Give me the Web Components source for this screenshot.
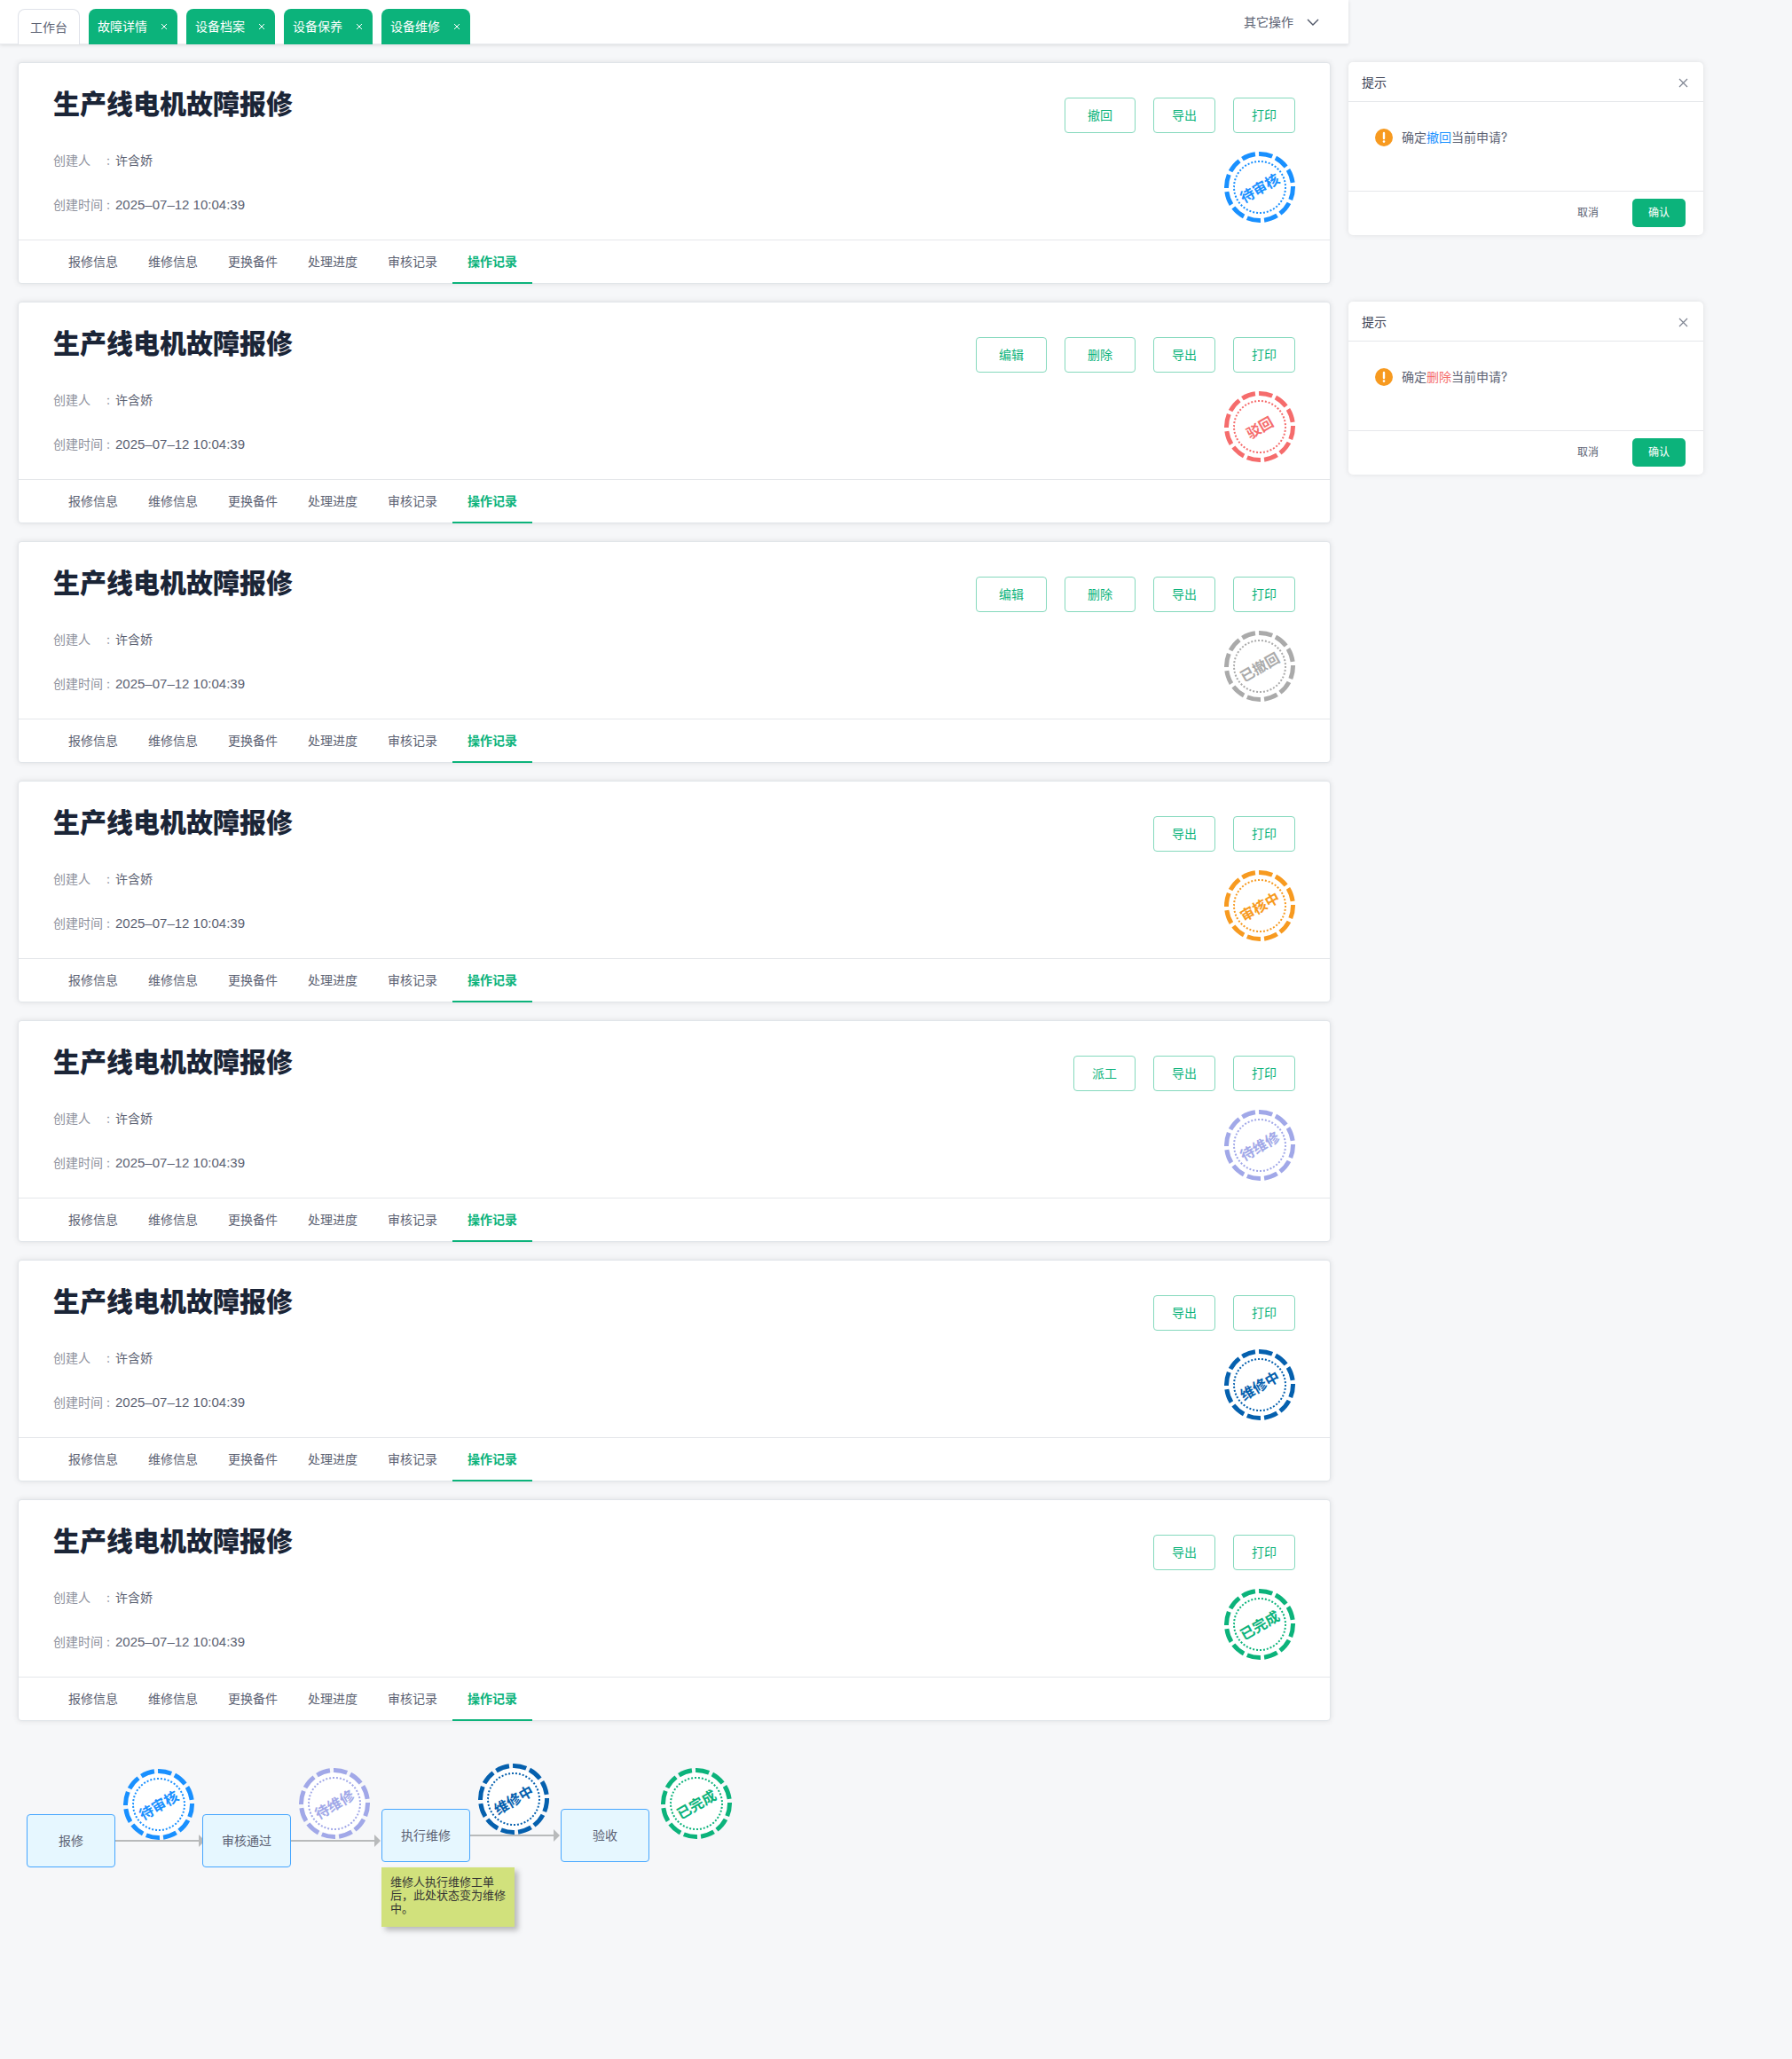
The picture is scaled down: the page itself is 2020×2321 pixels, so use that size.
<!DOCTYPE html>
<html lang="zh-CN">
<head>
<meta charset="UTF-8">
<meta name="viewport" content="width=device-width, initial-scale=1">
<title>设备维修</title>
<style>
  :root {
    --green: #0cb37b;
    --blue: #1990ff;
    --red: #f56c6c;
    --orange: #f79a20;
    --text: #5b6172;
    --muted: #8d909c;
    --line: #e5e7ea;
  }
  * { box-sizing: border-box; }
  body {
    margin: 0;
    min-height: 100vh;
    background: #f6f7f9;
    color: var(--text);
    font-family: Inter, "Noto Sans CJK SC", sans-serif;
    font-size: 14px;
    line-height: 20px;
  }
  .row {
    display: grid;
    grid-template-columns: minmax(0, 1fr) 500px;
    gap: 20px;
    padding-left: 20px;
    align-items: start;
  }
  .rows { display: grid; gap: 20px; padding-top: 20px; }
  em { font-style: normal; }
  .blue { color: var(--blue); }
  .red { color: var(--red); }
</style>
</head>
<body>
<top-bar>
  <page-tab home>工作台</page-tab>
  <page-tab>故障详情</page-tab>
  <page-tab>设备档案</page-tab>
  <page-tab>设备保养</page-tab>
  <page-tab>设备维修</page-tab>
</top-bar>

<main class="rows">
  <div class="row">
    <repair-card actions="撤回:wide,导出,打印" status="待审核" color="#1990ff"></repair-card>
    <confirm-dialog>确定<em class="blue">撤回</em>当前申请?</confirm-dialog>
  </div>
  <div class="row">
    <repair-card actions="编辑:wide,删除:wide,导出,打印" status="驳回" color="#f56c6c"></repair-card>
    <confirm-dialog>确定<em class="red">删除</em>当前申请?</confirm-dialog>
  </div>
  <div class="row">
    <repair-card actions="编辑:wide,删除:wide,导出,打印" status="已撤回" color="#aaaaaa"></repair-card>
  </div>
  <div class="row">
    <repair-card actions="导出,打印" status="审核中" color="#f79a20"></repair-card>
  </div>
  <div class="row">
    <repair-card actions="派工,导出,打印" status="待维修" color="#a1a8e8"></repair-card>
  </div>
  <div class="row">
    <repair-card actions="导出,打印" status="维修中" color="#0560ae"></repair-card>
  </div>
  <div class="row">
    <repair-card actions="导出,打印" status="已完成" color="#0cb37b"></repair-card>
  </div>
</main>

<flow-chart></flow-chart>

<script>
(function () {
  'use strict';

  const RESET = `
    * { box-sizing: border-box; }
    button { font: inherit; color: inherit; margin: 0; padding: 0; border: 0; background: none; cursor: pointer; }
  `;

  // Base class: one open shadow root filled from styles() and markup()
  class BaseElement extends HTMLElement {
    connectedCallback() {
      if (this.shadowRoot) return;
      this.attachShadow({ mode: 'open' });
      this.shadowRoot.innerHTML = `<style>${RESET}${this.styles()}</style>${this.markup()}`;
    }
    styles() { return ''; }
    markup() { return '<slot></slot>'; }
  }

  class PageTab extends BaseElement {
    styles() {
      return `
        :host {
          display: flex; align-items: center; justify-content: space-between;
          width: 100px; height: 40px; padding: 0 6px 0 10px;
          border-radius: 8px 8px 0 0;
          background: var(--green); color: #fff;
        }
        :host([home]) {
          width: 70px; padding: 0; justify-content: center;
          background: #fff; color: var(--text);
          border: 1px solid #dfe2e9; border-bottom: 0;
        }
        .close { display: flex; padding: 5px; }
        svg { width: 8px; height: 8px; stroke: #fff; fill: none; }
      `;
    }
    markup() {
      const close = `<button class="close" aria-label="关闭"><svg viewBox="0 0 8 8"><path d="M1 1l6 6M7 1l-6 6"/></svg></button>`;
      return `<button><slot></slot></button>${this.hasAttribute('home') ? '' : close}`;
    }
  }

  class TopBar extends BaseElement {
    styles() {
      return `
        :host {
          display: flex; align-items: flex-end; justify-content: space-between;
          width: calc(100% - 500px); height: 50px; padding: 0 32px 0 20px;
          background: #fff;
          box-shadow: inset 0 -1px 0 #ebedf0, 0 1px 4px rgba(0, 0, 0, 0.12);
        }
        nav { display: flex; gap: 10px; }
        .more { display: flex; align-items: center; gap: 14px; height: 50px; }
        svg { width: 16px; height: 16px; fill: none; stroke: #4e5566; stroke-width: 1.4; }
      `;
    }
    markup() {
      return `
        <nav><slot></slot></nav>
        <button class="more">其它操作<svg viewBox="0 0 16 16"><path d="M2 5l6 6 6-6"/></svg></button>`;
    }
  }

  class StatusStamp extends BaseElement {
    styles() {
      return `
        :host { display: block; width: 80px; height: 80px; flex: none; }
        svg { display: block; width: 100%; height: 100%; }
        text { font-size: 16px; font-weight: 700; text-anchor: middle; }
      `;
    }
    markup() {
      const color = this.getAttribute('color');
      return `
        <svg viewBox="0 0 80 80">
          <circle cx="40" cy="40" r="35" fill="#fff"/>
          <circle cx="40" cy="40" r="37.5" fill="none" stroke="${color}" stroke-width="5" pathLength="240" stroke-dasharray="15.8 4.2" stroke-dashoffset="1"/>
          <circle cx="40" cy="40" r="29" fill="none" stroke="${color}" stroke-width="2" pathLength="184" stroke-dasharray="2 2"/>
          <text x="40" y="47" fill="${color}" transform="rotate(-30 40 41)">${this.getAttribute('label')}</text>
        </svg>`;
    }
  }

  class RepairCard extends BaseElement {
    styles() {
      return `
        :host {
          display: block; background: #fff;
          border: 1px solid #e1e5e9; border-radius: 4px;
          box-shadow: 0 0 6px rgba(0, 0, 0, 0.1);
        }
        .body { display: flex; justify-content: space-between; height: 199px; padding: 0 39px; }
        h2 { margin: 24px 0 32px; font-size: 30px; line-height: 44px; font-weight: 900; color: #1b2537; }
        dl { display: grid; grid-template-columns: 60px 10px auto; row-gap: 30px; margin: 0; }
        dt { color: var(--muted); white-space: nowrap; }
        dd { margin: 0; }
        time { font-family: "Liberation Sans", sans-serif; font-size: 15px; }
        .side { display: flex; flex-direction: column; align-items: flex-end; gap: 21px; padding-top: 39px; }
        .actions { display: flex; gap: 20px; }
        .actions button {
          width: 70px; height: 40px;
          border: 1px solid #85d9bd; border-radius: 4px;
          color: var(--green);
        }
        .actions .wide { width: 80px; }
        nav { display: flex; height: 49px; padding: 0 39px; border-top: 1px solid var(--line); }
        nav button { width: 90px; margin-bottom: -1px; border-bottom: 2px solid transparent; }
        nav .on { color: var(--green); border-color: var(--green); font-weight: 700; }
      `;
    }
    markup() {
      const actions = this.getAttribute('actions').split(',').map(a => {
        const [label, cls] = a.split(':');
        return `<button class="${cls || ''}">${label}</button>`;
      }).join('');
      const tabs = ['报修信息', '维修信息', '更换备件', '处理进度', '审核记录', '操作记录']
        .map((t, i) => `<button class="${i === 5 ? 'on' : ''}">${t}</button>`).join('');
      return `
        <div class="body">
          <div>
            <h2>生产线电机故障报修</h2>
            <dl>
              <dt>创建人</dt><dt>:</dt><dd>许含娇</dd>
              <dt>创建时间</dt><dt>:</dt><dd><time datetime="2025-07-12T10:04:39">2025–07–12 10:04:39</time></dd>
            </dl>
          </div>
          <div class="side">
            <div class="actions">${actions}</div>
            <status-stamp label="${this.getAttribute('status')}" color="${this.getAttribute('color')}"></status-stamp>
          </div>
        </div>
        <nav>${tabs}</nav>`;
    }
  }

  class ConfirmDialog extends BaseElement {
    styles() {
      return `
        :host {
          display: block; width: 400px; background: #fff; border-radius: 5px;
          box-shadow: 0 0 6px rgba(0, 0, 0, 0.1);
        }
        header {
          display: flex; align-items: center; justify-content: space-between;
          height: 45px; padding: 1px 16px 0 15px;
          border-bottom: 1px solid var(--line); color: #3b4153;
        }
        header button { display: flex; }
        header svg { width: 14px; height: 14px; stroke: #7f8592; stroke-width: 1.2; }
        .msg { display: flex; gap: 10px; height: 100px; padding: 30px 30px 0; }
        .msg svg { width: 20px; height: 20px; flex: none; }
        footer {
          display: flex; align-items: flex-start; justify-content: flex-end; gap: 20px;
          height: 50px; padding: 8px 20px;
          border-top: 1px solid var(--line); font-size: 12px;
        }
        footer button { width: 60px; height: 32px; border-radius: 5px; }
        .ok { background: var(--green); color: #fff; }
      `;
    }
    markup() {
      return `
        <header>
          <span>提示</span>
          <button aria-label="关闭"><svg viewBox="0 0 14 14"><path d="M3 3l9 9M12 3l-9 9"/></svg></button>
        </header>
        <div class="msg">
          <svg viewBox="0 0 20 20">
            <circle cx="10" cy="10" r="10" fill="#f79a20"/>
            <path d="M10 5v6" stroke="#fff" stroke-width="2.4" stroke-linecap="round"/>
            <circle cx="10" cy="14.6" r="1.3" fill="#fff"/>
          </svg>
          <span><slot></slot></span>
        </div>
        <footer><button>取消</button><button class="ok">确认</button></footer>`;
    }
  }

  // Free canvas: nodes, arrows and stamps are placed by coordinates
  class FlowChart extends BaseElement {
    styles() {
      return `
        :host { display: block; position: relative; height: 381px; }
        .node, .note, status-stamp, .arrows { position: absolute; }
        .node {
          display: flex; align-items: center; justify-content: center;
          width: 100px; height: 60px;
          border: 1px solid #46a6ff; border-radius: 4px; background: #e6f7ff;
        }
        .arrows { left: 0; top: 0; width: 840px; height: 240px; fill: #b8babb; stroke: #b8babb; }
        .note {
          width: 150px; height: 67px; padding: 9px 10px; margin: 0;
          background: #d1e17c; color: #333;
          font-size: 13px; line-height: 15px;
          box-shadow: 4px 4px 6px rgba(0, 0, 0, 0.25);
        }
      `;
    }
    markup() {
      const nodes = [[30, 105, '报修'], [228, 105, '审核通过'], [430, 99, '执行维修'], [632, 99, '验收']];
      const stamps = [[139, 54, '待审核', '#1990ff'], [337, 53, '待维修', '#a1a8e8'], [539, 48, '维修中', '#0560ae'], [745, 53, '已完成', '#0cb37b']];
      const arrows = [[130, 135], [328, 135], [530, 129]];
      return `
        <svg class="arrows" viewBox="0 0 840 240">
          ${arrows.map(([x, y]) => `<path d="M${x} ${y}h95" stroke-width="2"/><path d="M${x + 94} ${y - 7}l7 7-7 7z" stroke="none"/>`).join('')}
        </svg>
        ${nodes.map(([x, y, t]) => `<div class="node" style="left:${x}px;top:${y}px">${t}</div>`).join('')}
        ${stamps.map(([x, y, t, c]) => `<status-stamp style="left:${x}px;top:${y}px" label="${t}" color="${c}"></status-stamp>`).join('')}
        <p class="note" style="left:430px;top:165px">维修人执行维修工单后，此处状态变为维修中。</p>`;
    }
  }

  customElements.define('page-tab', PageTab);
  customElements.define('top-bar', TopBar);
  customElements.define('status-stamp', StatusStamp);
  customElements.define('repair-card', RepairCard);
  customElements.define('confirm-dialog', ConfirmDialog);
  customElements.define('flow-chart', FlowChart);
})();
</script>
</body>
</html>
